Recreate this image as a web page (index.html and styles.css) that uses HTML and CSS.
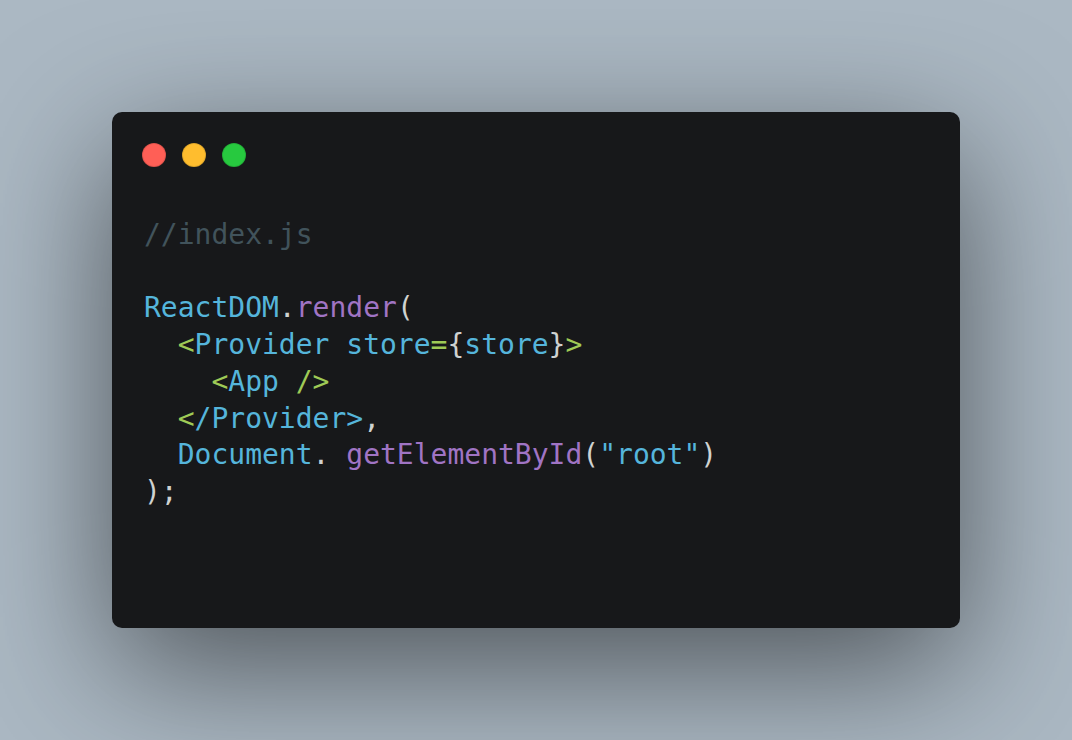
FILE: index.html
```html
<!DOCTYPE html>
<html>
<head>
<meta charset="utf-8">
<link rel="stylesheet" href="styles.css">
</head>
<body>
<div class="stage">
  <div class="window">
    <div class="controls">
      <span class="dot red"></span>
      <span class="dot yellow"></span>
      <span class="dot green"></span>
    </div>
    <pre class="code"><span class="c">//index.js</span>

<span class="b">ReactDOM</span><span class="w">.</span><span class="p">render</span><span class="w">(</span>
  <span class="g">&lt;</span><span class="b">Provider store</span><span class="g">=</span><span class="w">{</span><span class="b">store</span><span class="w">}</span><span class="g">&gt;</span>
    <span class="g">&lt;</span><span class="b">App </span><span class="g">/&gt;</span>
  <span class="g">&lt;</span><span class="b">/Provider&gt;</span><span class="w">,</span>
  <span class="b">Document</span><span class="w">. </span><span class="p">getElementById</span><span class="w">(</span><span class="b">"root"</span><span class="w">)</span>
<span class="w">);</span></pre>
  </div>
</div>
</body>
</html>
```

FILE: styles.css
```css
html, body {
  margin: 0;
  padding: 0;
}
body {
  width: 1072px;
  height: 740px;
  background: #abb8c3;
  overflow: hidden;
}
.stage {
  padding: 112px;
}
.window {
  width: 848px;
  height: 516px;
  box-sizing: border-box;
  background: #17181a;
  border-radius: 10px;
  box-shadow: 0 40px 136px rgba(0, 0, 0, 0.55);
  display: flex;
  flex-direction: column;
}
.controls {
  display: flex;
  gap: 16px;
  padding: 31px 0 0 30px;
}
.dot {
  width: 24px;
  height: 24px;
  border-radius: 50%;
  display: block;
  box-sizing: border-box;
  border: 1px solid rgba(0, 0, 0, 0.12);
}
.red { background: #ff5f56; }
.yellow { background: #ffbd2e; }
.green { background: #27c93f; }
.code {
  margin: 0;
  padding: 50px 32px 0 32px;
  font-family: "DejaVu Sans Mono", "Liberation Mono", monospace;
  font-size: 28px;
  line-height: 36.7px;
  color: #cfd2d1;
  white-space: pre;
}
.c { color: #41535b; }
.b { color: #55b5db; }
.p { color: #a074c4; }
.g { color: #9fca56; }
.w { color: #cfd2d1; }
```
